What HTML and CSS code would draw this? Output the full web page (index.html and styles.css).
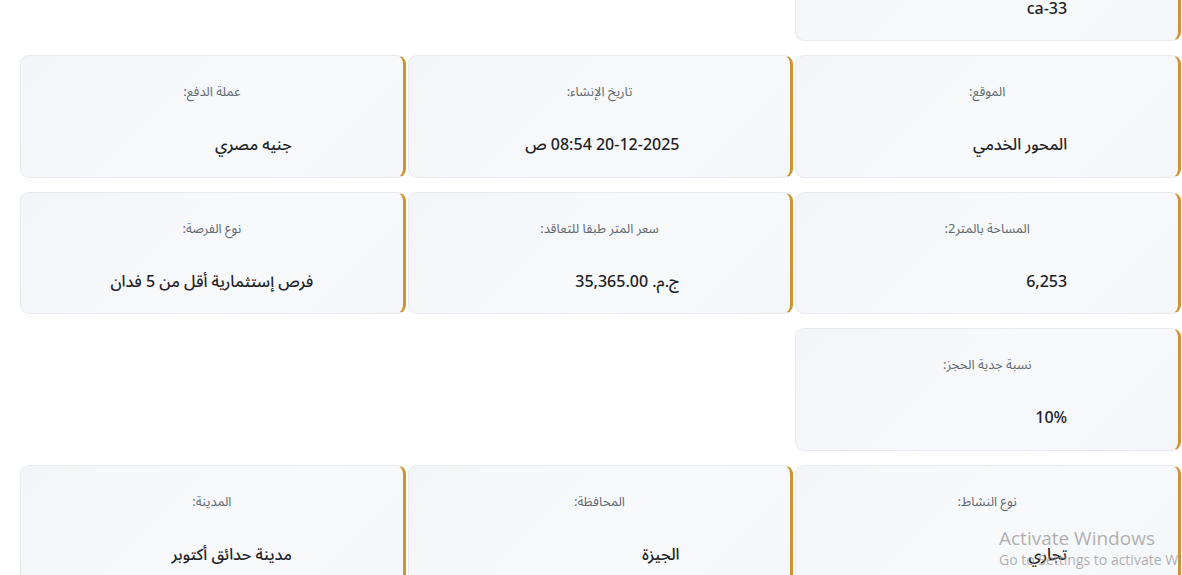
FILE: index.html
```html
<!DOCTYPE html>
<html lang="ar" dir="rtl">
<head>
<meta charset="utf-8">
<title>تفاصيل الفرصة</title>
<link rel="stylesheet" href="styles.css">
</head>
<body>
<main class="details">
  <section class="grid">
    <div class="card"><div class="label">الكود:</div><div class="value">ca-33</div></div>
  </section>
  <section class="grid">
    <div class="card"><div class="label">الموقع:</div><div class="value">المحور الخدمي</div></div>
    <div class="card"><div class="label">تاريخ الإنشاء:</div><div class="value">20-12-2025 08:54 ص</div></div>
    <div class="card"><div class="label">عملة الدفع:</div><div class="value">جنيه مصري</div></div>
    <div class="card"><div class="label">المساحة بالمتر2:</div><div class="value">6,253</div></div>
    <div class="card"><div class="label">سعر المتر طبقا للتعاقد:</div><div class="value">ج.م. 35,365.00</div></div>
    <div class="card"><div class="label">نوع الفرصة:</div><div class="value">فرص إستثمارية أقل من 5 فدان</div></div>
  </section>
  <section class="grid">
    <div class="card"><div class="label">نسبة جدية الحجز:</div><div class="value">10%</div></div>
  </section>
  <section class="grid">
    <div class="card"><div class="label">نوع النشاط:</div><div class="value">تجاري</div></div>
    <div class="card"><div class="label">المحافظة:</div><div class="value">الجيزة</div></div>
    <div class="card"><div class="label">المدينة:</div><div class="value">مدينة حدائق أكتوبر</div></div>
  </section>
</main>
<div class="watermark" dir="ltr">
  <div class="wm-title">Activate Windows</div>
  <div class="wm-sub">Go to Settings to activate Windows.</div>
</div>
</body>
</html>
```

FILE: styles.css
```css
html, body {
  margin: 0;
  padding: 0;
  background: #ffffff;
  overflow: hidden;
}
body {
  font-family: "Noto Sans Arabic", "Noto Sans", "DejaVu Sans", sans-serif;
  color: #1f2329;
}
.details {
  display: flex;
  flex-direction: column;
  gap: 14px;
  padding: 0 1px 0 20px;
  margin-top: -81.5px;
}
.grid {
  display: grid;
  grid-template-columns: repeat(3, 1fr);
  column-gap: 2px;
  row-gap: 14px;
}
.card {
  box-sizing: border-box;
  height: 122.5px;
  padding-top: 27px;
  text-align: center;
  background: linear-gradient(135deg, #f3f5f8 0%, #f7f9fb 60%, #f4f6f9 100%);
  border: 1px solid #e6e9ee;
  border-right: 3px solid #cf9330;
  border-radius: 9px;
}
.label {
  font-size: 13px;
  line-height: 18px;
  color: #62686f;
}
.value {
  display: inline-block;
  min-width: 160px;
  margin-top: 32px;
  text-align: right;
  font-size: 16px;
  line-height: 24px;
  font-weight: 500;
  color: #1e2226;
}
.watermark {
  position: absolute;
  left: 999px;
  top: 526px;
  color: rgba(150, 150, 150, 0.75);
  font-family: "Open Sans", "Noto Sans", sans-serif;
  white-space: nowrap;
  pointer-events: none;
}
.wm-title {
  font-size: 19px;
  line-height: 24px;
}
.wm-sub {
  font-size: 14px;
  line-height: 20px;
}
```
